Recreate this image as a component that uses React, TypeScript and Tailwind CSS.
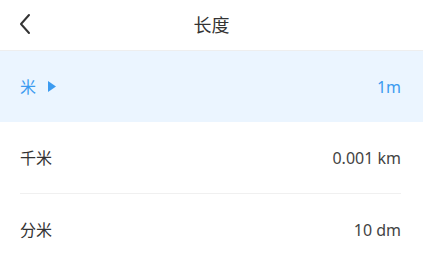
import React from "react";

const font = { fontFamily: '"Noto Sans", "Noto Sans CJK SC", sans-serif' };

export default function App() {
  return (
    <div className="w-[423px] h-[264px] overflow-hidden bg-white text-[#333]" style={font}>
      <div className="h-[51px] flex items-center relative border-b border-[#eeeeee]">
        <button className="absolute left-[16px] top-[12px] w-[18px] h-[24px] flex items-center justify-center">
          <svg width="14" height="22" viewBox="0 0 14 22" fill="none">
            <path d="M11 2 L3 11 L11 20" stroke="#333" strokeWidth="2" strokeLinecap="round" strokeLinejoin="round" />
          </svg>
        </button>
        <div className="flex-1 text-center text-[18px] leading-none">长度</div>
      </div>
      <div className="h-[71px] bg-[#ebf5ff] flex items-center justify-between pl-[20px] pr-[22px] text-[#3c9bf0] text-[16px]">
        <div className="flex items-center gap-[12px]">
          <span>米</span>
          <svg width="8" height="11" viewBox="0 0 8 11">
            <path d="M0 0 L8 5.5 L0 11 Z" fill="#3c9bf0" />
          </svg>
        </div>
        <span>1m</span>
      </div>
      <div className="pl-[20px] pr-[22px]">
        <div className="h-[72px] flex items-center justify-between border-b border-[#f0f0f0] text-[16px]">
          <span>千米</span>
          <span className="text-[#444]">0.001 km</span>
        </div>
        <div className="h-[71px] flex items-center justify-between text-[16px]">
          <span>分米</span>
          <span className="text-[#444]">10 dm</span>
        </div>
      </div>
    </div>
  );
}
